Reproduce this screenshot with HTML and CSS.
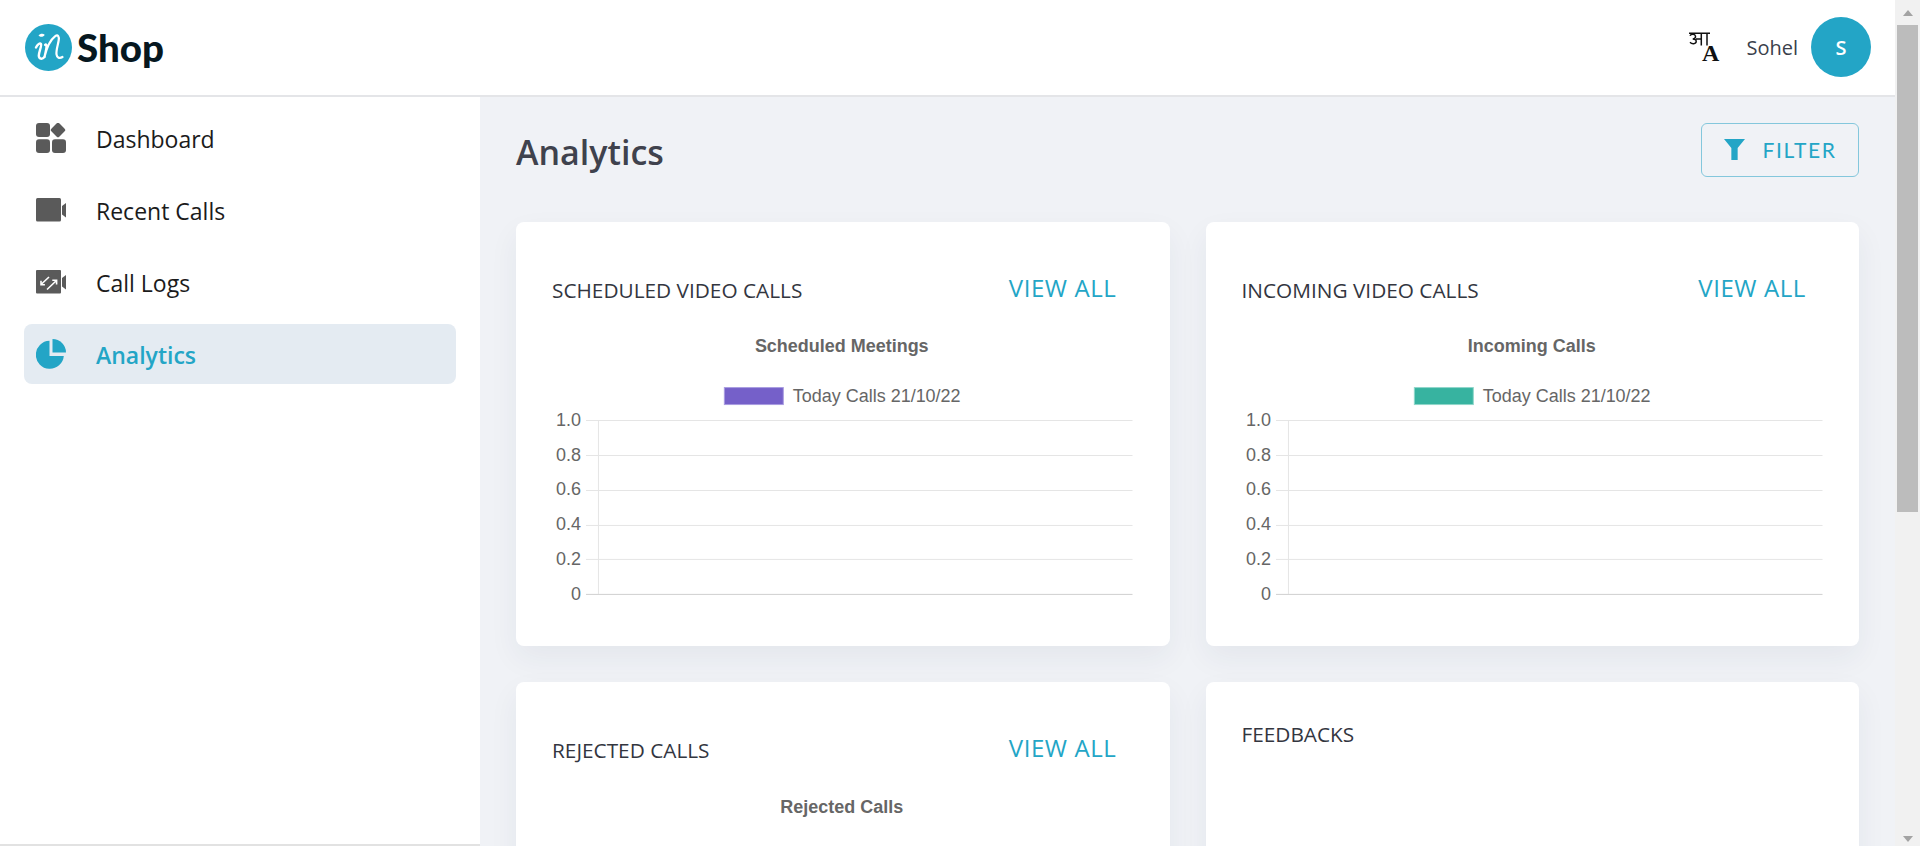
FILE: index.html
```html
<!DOCTYPE html>
<html lang="en">
<head>
<meta charset="utf-8">
<title>Analytics</title>
<link rel="stylesheet" href="styles.css">
</head>
<body>
<div class="window">
  <div class="app">
    <header class="topbar">
      <div class="brand">
        <svg class="brand-mark" viewBox="0 0 47 47" aria-hidden="true">
          <circle cx="23.5" cy="23.5" r="23.5" fill="#23a5c6"/>
          <path d="M13.5 11.500c1.500-1.800 4.300-2.200 6.200-.8-1 2.300-4.200 3-6.200.8z" fill="#fff"/>
          <path d="M11 23.500c1.400-2.800 3.800-5 5-3.500 1 1.500-2.200 8-2.200 11.500 0 3.500 3.200 4.300 5.700 1.500" fill="none" stroke="#fff" stroke-width="2.400" stroke-linecap="round"/>
          <path d="M20 21c.8-1 1.500-.8 1.500.8 0 3-1.300 7.500-2 11 1.800-7.500 5.800-17 10.500-20.500 3-2.200 4.300.3 3.700 4-.7 4.500-2.700 9.500-2.200 14 .4 3.400 3 4.700 6 2.700" fill="none" stroke="#fff" stroke-width="2.200" stroke-linecap="round" stroke-linejoin="round"/>
        </svg>
        <span class="brand-name">Shop</span>
      </div>
      <div class="account">
        <svg class="lang" viewBox="0 0 32 30" aria-hidden="true">
          <path d="M1 3.800c1-2.200 5-2.200 5.500.3.300 1.800-1 2.800-2.800 2.800 2.200 0 3.700.9 3.500 2.800-.2 2.300-4.300 2.700-6.200.5M7 7h5.300M12.300 1.500v12M18 1.500v12M0 1.200h21" fill="none" stroke="#111" stroke-width="1.500"/>
          <text class="lang-a" x="13" y="29">A</text>
        </svg>
        <span class="user-name">Sohel</span>
        <span class="avatar">S</span>
      </div>
    </header>
    <div class="body">
      <nav class="sidebar">
        <a class="nav-item">
          <svg class="nav-icon" viewBox="0 0 30 30" aria-hidden="true"><rect width="14" height="14" rx="3"/><rect x="16.400" y="1.400" width="11.200" height="11.200" rx="1.800" transform="rotate(45 22 7)"/><rect y="16.300" width="14" height="13.700" rx="3"/><rect x="16" y="16.300" width="14" height="13.700" rx="3"/></svg>
          <span class="nav-label">Dashboard</span>
        </a>
        <a class="nav-item">
          <svg class="nav-icon" viewBox="0 0 30 30" aria-hidden="true"><rect y="3" width="25" height="23.500" rx="1.500"/><path d="M26 11l4-3v14.500l-4-3z"/></svg>
          <span class="nav-label">Recent Calls</span>
        </a>
        <a class="nav-item">
          <svg class="nav-icon" viewBox="0 0 30 30" aria-hidden="true"><rect y="3" width="25" height="23.500" rx="1"/><path d="M26 11l4-3v14.500l-4-3z"/><path d="M5 17.500L13 10M5 13.800v3.900h3.900M11 22.500L20.500 13.500M16.300 13.300h4.300v4.300" fill="none" stroke="#fff" stroke-width="1.600"/></svg>
          <span class="nav-label">Call Logs</span>
        </a>
        <a class="nav-item active">
          <svg class="nav-icon" viewBox="0 0 30 30" aria-hidden="true"><path d="M13.500 1.800A14 14 0 1 0 27.800 17H13.500z"/><path d="M16.500 0A13.500 13.500 0 0 1 30 13.500H16.500z"/></svg>
          <span class="nav-label">Analytics</span>
        </a>
      </nav>
      <main class="content">
        <div class="page-head">
          <h1>Analytics</h1>
          <button class="filter">
            <svg viewBox="0 0 20 20" aria-hidden="true"><path d="M0 0h20l-7 8.500V20H7V8.500z"/></svg>
            FILTER
          </button>
        </div>
        <div class="cards">
          <section class="card">
            <div class="card-head"><h2>SCHEDULED VIDEO CALLS</h2><a class="view-all">VIEW ALL</a></div>
            <svg class="chart" viewBox="0 0 582 280" aria-label="Scheduled Meetings">
              <text class="chart-title" x="290" y="22">Scheduled Meetings</text>
              <rect class="swatch-purple" x="172.500" y="57.500" width="59" height="17"/>
              <text class="legend" x="241" y="72">Today Calls 21/10/22</text>
              <path class="grid" d="M34 90.500H581M34 125.500H581M34 160.500H581M34 195.500H581M34 229.500H581M46.500 90V264"/>
              <path class="axis" d="M34 264.500H581"/>
              <g class="ticks"><text x="29" y="96">1.0</text><text x="29" y="131">0.8</text><text x="29" y="165">0.6</text><text x="29" y="200">0.4</text><text x="29" y="235">0.2</text><text x="29" y="270">0</text></g>
            </svg>
          </section>
          <section class="card">
            <div class="card-head"><h2>INCOMING VIDEO CALLS</h2><a class="view-all">VIEW ALL</a></div>
            <svg class="chart" viewBox="0 0 582 280" aria-label="Incoming Calls">
              <text class="chart-title" x="290" y="22">Incoming Calls</text>
              <rect class="swatch-green" x="172.500" y="57.500" width="59" height="17"/>
              <text class="legend" x="241" y="72">Today Calls 21/10/22</text>
              <path class="grid" d="M34 90.500H581M34 125.500H581M34 160.500H581M34 195.500H581M34 229.500H581M46.500 90V264"/>
              <path class="axis" d="M34 264.500H581"/>
              <g class="ticks"><text x="29" y="96">1.0</text><text x="29" y="131">0.8</text><text x="29" y="165">0.6</text><text x="29" y="200">0.4</text><text x="29" y="235">0.2</text><text x="29" y="270">0</text></g>
            </svg>
          </section>
          <section class="card">
            <div class="card-head"><h2>REJECTED CALLS</h2><a class="view-all">VIEW ALL</a></div>
            <svg class="chart" viewBox="0 0 582 280" aria-label="Rejected Calls">
              <text class="chart-title" x="290" y="23">Rejected Calls</text>
            </svg>
          </section>
          <section class="card">
            <h2 class="feedback-title">FEEDBACKS</h2>
          </section>
        </div>
      </main>
    </div>
  </div>
  <div class="scrollbar" aria-hidden="true">
    <div class="scroll-top">
      <span class="arrow-up"></span>
      <span class="thumb"></span>
    </div>
    <span class="arrow-down"></span>
  </div>
</div>
</body>
</html>
```

FILE: styles.css
```css
* { box-sizing: border-box; }
html, body { margin: 0; height: 100%; overflow: hidden; }
body { font-family: "Open Sans", "Noto Sans", sans-serif; color: #333; background: #f0f2f6; }

.window { display: flex; height: 846px; }
.app { flex: 1; min-width: 0; display: flex; flex-direction: column; }

.topbar {
  height: 97px;
  flex: none;
  display: flex;
  align-items: center;
  justify-content: space-between;
  padding: 0 24px 1px 24px;
  background: #fff;
  border-bottom: 2px solid #e4e5e8;
}
.brand { display: flex; align-items: center; gap: 5px; }
.brand-mark { width: 47px; height: 47px; display: block; margin-left: 1px; }
.brand-name { font-family: "Lato", sans-serif; font-weight: 900; font-size: 38.500px; line-height: 47px; color: #06171f; }
.account { display: flex; align-items: center; }
.lang { width: 32px; height: 30px; margin-right: 25px; overflow: visible; }
.lang-a { font-family: "Liberation Serif", serif; font-weight: 700; font-size: 24px; fill: #111; }
.user-name { font-size: 20px; color: #3a3f4b; margin-right: 13px; padding-top: 1px; }
.avatar {
  width: 60px; height: 60px; border-radius: 50%;
  background: #23a5c6; color: #fff;
  display: flex; align-items: center; justify-content: center;
  font-size: 20px; font-weight: 600;
}

.body { flex: 1; min-height: 0; display: flex; }
.sidebar {
  width: 480px; flex: none;
  display: flex; flex-direction: column; gap: 12px;
  padding: 11px 24px 0;
  background: #fff;
  border-bottom: 2px solid #e2e2e2;
}
.nav-item {
  height: 60px; display: flex; align-items: center; gap: 30px;
  padding: 0 12px; border-radius: 8px;
  font-size: 23px; color: #1b1b1b; font-weight: 500;
}
.nav-label { padding-top: 2px; }
.nav-icon { width: 30px; height: 30px; flex: none; fill: #5a5a5a; }
.nav-item.active { background: #e4ebf2; color: #23a5c6; font-weight: 600; }
.nav-item.active .nav-icon { fill: #23a5c6; }

.content { flex: 1; min-width: 0; overflow: hidden; padding: 0 36px; }
.page-head { height: 125px; display: flex; align-items: center; justify-content: space-between; padding-bottom: 20px; }
h1 { margin: 0; padding-top: 5px; font-size: 34px; font-weight: 600; color: #3f424d; }
.filter {
  width: 158px; height: 54px;
  display: flex; align-items: center; justify-content: center; gap: 18px;
  border: 1px solid #84c7dc; border-radius: 6px;
  background: transparent; color: #23a5c6;
  font-family: "Lato", sans-serif; font-size: 21px; letter-spacing: 1.600px;
}
.filter svg { width: 21px; height: 21px; fill: #23a5c6; }

.cards { display: grid; grid-template-columns: 1fr 1fr; gap: 36px; }
.card {
  height: 424px; padding: 36px;
  background: #fff; border-radius: 8px;
  box-shadow: 0 12px 30px rgba(40, 50, 80, 0.06);
}
.card-head { height: 60px; margin-bottom: 12px; display: flex; align-items: center; justify-content: space-between; padding-right: 17px; }
h2 { margin: 0; font-size: 20.800px; font-weight: 500; color: #33363f; padding-top: 4px; }
.feedback-title { padding-top: 0; line-height: 32px; }
.view-all { font-size: 24px; font-weight: 400; letter-spacing: 0.600px; color: #23a5c6; padding-bottom: 2px; }

.chart { display: block; width: 100%; height: 280px; font-family: "Liberation Sans", Arial, sans-serif; }
.chart-title { font-size: 18px; font-weight: 700; fill: #666; text-anchor: middle; }
.legend { font-size: 18px; fill: #666; }
.grid { fill: none; stroke: #e5e5e5; stroke-width: 1; }
.axis { fill: none; stroke: #cfcfcf; stroke-width: 1; }
.ticks text { font-size: 18px; fill: #666; text-anchor: end; }
.swatch-purple { fill: #7560c9; stroke: #a99ce0; }
.swatch-green { fill: #37b3a0; stroke: #8fd6ca; }

.scrollbar {
  width: 25px; flex: none;
  display: flex; flex-direction: column; justify-content: space-between; align-items: center;
  padding-bottom: 4px;
  background: #f1f1f1;
}
.scroll-top { display: flex; flex-direction: column; align-items: center; }
.arrow-up { margin-top: 10px; width: 0; height: 0; border: 5.500px solid transparent; border-top: 0; border-bottom: 6px solid #a3a3a3; }
.thumb { width: 21px; height: 487px; margin-top: 9px; background: #bcbcbc; }
.arrow-down { width: 0; height: 0; border: 5.500px solid transparent; border-bottom: 0; border-top: 6px solid #a3a3a3; }
```
